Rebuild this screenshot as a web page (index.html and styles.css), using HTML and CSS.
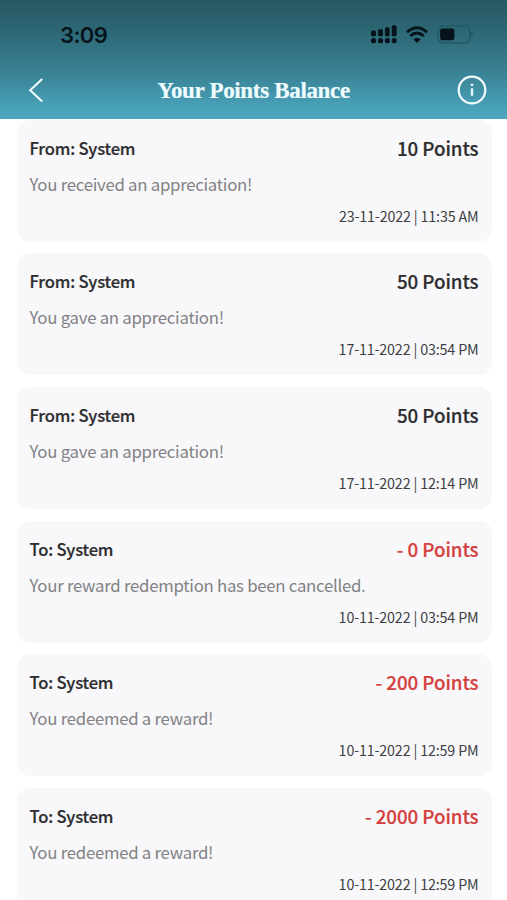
FILE: index.html
```html
<!DOCTYPE html>
<html lang="en">
<head>
<meta charset="utf-8">
<title>Your Points Balance</title>
<link rel="stylesheet" href="styles.css">
</head>
<body>
<header class="header">
  <div class="status">
    <span class="time">3:09</span>
    <svg class="indicators" width="104" height="22" viewBox="370 24 104 22" aria-hidden="true">
      <g fill="#06131b">
        <rect x="371" y="30.6" width="5" height="5.6" rx="1.5"/><rect x="378" y="29.2" width="5" height="7" rx="1.5"/><rect x="385" y="27.2" width="4.6" height="9" rx="1.5"/><rect x="391.8" y="25.2" width="4.8" height="11" rx="1.5"/>
        <rect x="371" y="38" width="5" height="5.2" rx="2"/><rect x="378" y="38" width="5" height="5.2" rx="2"/><rect x="385" y="38" width="4.8" height="5.2" rx="2"/><rect x="391.8" y="38" width="4.8" height="5.2" rx="2"/>
        <path d="M413.3 39.3Q417 36.2 420.7 39.3L417 42.9Z"/>
        <rect x="440.1" y="28.6" width="14.3" height="11.6" rx="2.2"/>
      </g>
      <path d="M407 32.1Q417 23.3 427 32.1M410.3 36Q417 30.1 423.7 36" fill="none" stroke="#06131b" stroke-width="2.9"/>
      <rect x="438.2" y="26.1" width="31.6" height="16.6" rx="4.6" fill="none" stroke="#215967" stroke-width="1.5"/>
      <path d="M471.2 31.8Q473.4 32.5 473.4 34.4T471.2 37Z" fill="#215967"/>
    </svg>
  </div>
  <div class="nav">
    <svg width="18" height="28" viewBox="0 0 18 28" aria-hidden="true"><path d="M14.2 3L2.2 14.3L14.2 25.6" fill="none" stroke="#eefcff" stroke-width="2.1"/></svg>
    <h1 class="title">Your Points Balance</h1>
    <svg width="30" height="30" viewBox="0 0 30 30" aria-hidden="true"><circle cx="15" cy="15" r="13.3" fill="none" stroke="#f2fdff" stroke-width="2.2"/><path d="M15 13.3V20.8M15 8.7V11" stroke="#e4faff" stroke-width="2.4"/></svg>
  </div>
</header>
<main class="list">
  <article class="card"><div class="row"><span class="party">From: System</span><span class="points">10 Points</span></div><p class="message">You received an appreciation!</p><time class="date">23-11-2022 | 11:35 AM</time></article>
  <article class="card"><div class="row"><span class="party">From: System</span><span class="points">50 Points</span></div><p class="message">You gave an appreciation!</p><time class="date">17-11-2022 | 03:54 PM</time></article>
  <article class="card"><div class="row"><span class="party">From: System</span><span class="points">50 Points</span></div><p class="message">You gave an appreciation!</p><time class="date">17-11-2022 | 12:14 PM</time></article>
  <article class="card"><div class="row"><span class="party">To: System</span><span class="points spent">- 0 Points</span></div><p class="message">Your reward redemption has been cancelled.</p><time class="date">10-11-2022 | 03:54 PM</time></article>
  <article class="card"><div class="row"><span class="party">To: System</span><span class="points spent">- 200 Points</span></div><p class="message">You redeemed a reward!</p><time class="date">10-11-2022 | 12:59 PM</time></article>
  <article class="card"><div class="row"><span class="party">To: System</span><span class="points spent">- 2000 Points</span></div><p class="message">You redeemed a reward!</p><time class="date">10-11-2022 | 12:59 PM</time></article>
</main>
</body>
</html>
```
FILE: styles.css
```css
* { box-sizing: border-box; }
body {
  margin: 0;
  height: 900px;
  overflow: hidden;
  display: flex;
  flex-direction: column;
  background: #fff;
  font-family: "Noto Sans CJK SC", "Open Sans", sans-serif;
}
.header {
  flex: none;
  height: 118.5px;
  background: linear-gradient(#255762 0%, #2d6774 25%, #398093 60%, #4aa5bd 94%, #4aa5bd 100%);
}
.status {
  height: 70px;
  padding: 0 33px 0 60px;
  display: flex;
  align-items: center;
  justify-content: space-between;
}
.time {
  font: 600 22px/30px Inter, sans-serif;
  letter-spacing: -0.6px;
  color: #06131b;
}
.nav {
  height: 40px;
  padding: 0 20px 0 28px;
  display: grid;
  grid-template-columns: 22px 1fr 30px;
  align-items: center;
}
.title {
  margin: 0;
  padding-top: 2px;
  text-align: center;
  font: bold 23px/30px "Liberation Serif", serif;
  letter-spacing: -0.33px;
  white-space: nowrap;
  color: #effcff;
  -webkit-text-stroke: 0.2px currentColor;
}
.list {
  flex: none;
  padding: 1px 15.5px 0 16.5px;
  display: grid;
  gap: 11.7px;
}
.card {
  height: 122px;
  padding: 13px 13px 0 13px;
  border-radius: 13px;
  background: #f8f8fa;
}
.row {
  height: 30px;
  display: flex;
  justify-content: space-between;
  align-items: center;
  color: #2d2d30;
  font-weight: 500;
  -webkit-text-stroke: 0.2px currentColor;
}
.party { font-size: 16.6px; line-height: 30px; letter-spacing: -0.2px; }
.points { font-size: 18.8px; line-height: 30px; letter-spacing: -0.08px; }
.spent { color: #d5403f; }
.message {
  margin: 8px 0 0;
  font-size: 16.8px;
  line-height: 26px;
  letter-spacing: -0.27px;
  color: #828285;
}
.date {
  display: block;
  margin-top: 7px;
  text-align: right;
  font-size: 14.3px;
  line-height: 24px;
  letter-spacing: -0.16px;
  color: #3e3e42;
}
```
